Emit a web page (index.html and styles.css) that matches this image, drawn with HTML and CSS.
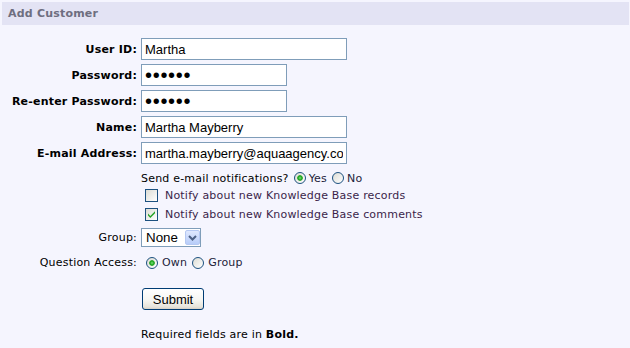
FILE: index.html
```html
<!DOCTYPE html>
<html>
<head>
<meta charset="utf-8">
<title>Add Customer</title>
<link rel="stylesheet" href="styles.css">
</head>
<body>
<div class="panel">
  <div class="header">Add Customer</div>
  <form class="form">
    <div class="row field">
      <label class="lbl req" for="uid">User ID:</label>
      <input class="txt wide" id="uid" type="text" value="Martha">
    </div>
    <div class="row field">
      <label class="lbl req" for="pw">Password:</label>
      <input class="txt narrow pw" id="pw" type="password" value="secret">
    </div>
    <div class="row field">
      <label class="lbl req" for="pw2">Re-enter Password:</label>
      <input class="txt narrow pw" id="pw2" type="password" value="secret">
    </div>
    <div class="row field">
      <label class="lbl req" for="name">Name:</label>
      <input class="txt wide" id="name" type="text" value="Martha Mayberry">
    </div>
    <div class="row field">
      <label class="lbl req" for="email">E-mail Address:</label>
      <input class="txt wide" id="email" type="text" value="martha.mayberry@aquaagency.com">
    </div>
    <div class="row send">
      <span class="lbl"></span>
      <span class="plain">Send e-mail notifications?</span>
      <input class="radio r-yes" type="radio" name="notify" id="ny" checked>
      <label class="opt" for="ny">Yes</label>
      <input class="radio r-no" type="radio" name="notify" id="nn">
      <label class="opt" for="nn">No</label>
    </div>
    <div class="row check">
      <span class="lbl"></span>
      <span class="cbwrap"><input class="cb" type="checkbox" id="kbr"></span>
      <label class="notify" for="kbr">Notify about new Knowledge Base records</label>
    </div>
    <div class="row check">
      <span class="lbl"></span>
      <span class="cbwrap"><input class="cb" type="checkbox" id="kbc" checked><svg class="tick" width="13" height="13" viewBox="0 0 13 13"><path d="M3 5.5 L5.3 8 L10 3.2 L10 5.2 L5.3 10 L3 7.5 Z" fill="#21a121"/></svg></span>
      <label class="notify" for="kbc">Notify about new Knowledge Base comments</label>
    </div>
    <div class="row group">
      <label class="lbl" for="grp">Group:</label>
      <span class="select">
        <select id="grp"><option>None</option></select>
        <span class="arrow"><svg width="15" height="15" viewBox="0 0 15 15"><path d="M4 6 L7.5 9.5 L11 6" fill="none" stroke="#4d6185" stroke-width="2"/></svg></span>
      </span>
    </div>
    <div class="row access">
      <span class="lbl">Question Access:</span>
      <input class="radio r-own" type="radio" name="qa" id="qo" checked>
      <label class="opt" for="qo">Own</label>
      <input class="radio r-grp" type="radio" name="qa" id="qg">
      <label class="opt" for="qg">Group</label>
    </div>
    <div class="row submit">
      <span class="lbl"></span>
      <button class="btn" type="button">Submit</button>
    </div>
    <div class="row note">
      <span class="lbl"></span>
      <span class="plain">Required fields are in <b>Bold.</b></span>
    </div>
  </form>
</div>
</body>
</html>
```
FILE: styles.css
```css
html, body {
  margin: 0;
  padding: 0;
  background: #f5f5fe;
}
body {
  font-family: "DejaVu Sans", Verdana, sans-serif;
  font-size: 11px;
  letter-spacing: 0.2px;
  color: #000;
}
.panel {
  padding: 2px 1px 0 2px;
}
.header {
  height: 23px;
  line-height: 23px;
  background: #e3e3f4;
  color: #6e6e80;
  font-weight: bold;
  padding-left: 6px;
}
.form {
  margin: 13px 0 0 -2px;
  display: flex;
  flex-direction: column;
}
.row {
  display: flex;
  align-items: center;
}
.lbl {
  flex: 0 0 137px;
  text-align: right;
  margin-right: 4px;
}
.req {
  font-weight: bold;
}
.field {
  height: 22px;
  margin-bottom: 4px;
}
.txt {
  box-sizing: border-box;
  height: 22px;
  border: 1px solid #7f9db9;
  background: #fff;
  padding: 0 3px;
  margin: 0;
  font-family: "Liberation Sans", Arial, sans-serif;
  font-size: 13px;
  letter-spacing: 0;
  color: #000;
  outline: none;
}
.wide { width: 206px; }
.narrow { width: 146px; }
.pw {
  font-size: 20px;
  letter-spacing: 0.7px;
}
.send {
  height: 16px;
  margin-top: 2px;
}
.radio {
  appearance: none;
  -webkit-appearance: none;
  box-sizing: border-box;
  width: 12px;
  height: 12px;
  margin: 0;
  border: 1px solid #1c5180;
  border-radius: 50%;
  background: linear-gradient(135deg, #dcdcd4, #fff);
}
.radio:checked {
  background:
    radial-gradient(circle, #7fe07f 0, #2bb02b 1.6px, #21a121 2.4px, rgba(33,161,33,0) 3.2px),
    linear-gradient(135deg, #dcdcd4, #fff);
}
.opt {
  color: #1d1d3a;
}
.r-yes { margin-left: 5px; margin-right: 3px; }
.r-no { margin-left: 5px; margin-right: 3px; }
.check {
  height: 19px;
}
.cbwrap {
  position: relative;
  width: 13px;
  height: 13px;
  margin-left: 4px;
  margin-right: 7px;
}
.cb {
  appearance: none;
  -webkit-appearance: none;
  box-sizing: border-box;
  width: 13px;
  height: 13px;
  margin: 0;
  display: block;
  border: 1px solid #1c5180;
  background: linear-gradient(135deg, #dcdcd4, #fff);
}
.tick {
  position: absolute;
  left: 0;
  top: 0;
}
.notify {
  color: #3b1f4a;
}
.group {
  height: 19px;
  margin-top: 4px;
}
.select {
  box-sizing: border-box;
  display: flex;
  align-items: center;
  width: 60px;
  height: 19px;
  border: 1px solid #7f9db9;
  background: #fff;
}
.select select {
  appearance: none;
  -webkit-appearance: none;
  border: none;
  background: transparent;
  font-family: "Liberation Sans", Arial, sans-serif;
  font-size: 13.33px;
  letter-spacing: 0;
  color: #000;
  padding: 0 0 0 4px;
  margin: 0;
  width: 43px;
  height: 17px;
  outline: none;
}
.arrow {
  box-sizing: border-box;
  width: 15px;
  height: 15px;
  border: 1px solid #b5c8f2;
  border-radius: 2px;
  background: linear-gradient(#dfe8fe, #b8cdf9);
  display: flex;
}
.arrow svg { display: block; margin: -1px; }
.access {
  height: 19px;
  margin-top: 6px;
}
.r-own { margin-left: 5px; margin-right: 4px; }
.r-grp { margin-left: 5px; margin-right: 4px; }
.submit {
  margin-top: 16px;
  height: 22px;
}
.btn {
  box-sizing: border-box;
  width: 62px;
  height: 22px;
  margin: 0 0 0 1px;
  border: 1px solid #003c74;
  border-radius: 3px;
  background: linear-gradient(180deg, #ffffff 0%, #f6f6f2 55%, #e6e3da 90%, #d6d0c5 100%);
  font-family: "Liberation Sans", Arial, sans-serif;
  font-size: 13px;
  letter-spacing: 0;
  color: #000;
  padding: 0;
}
.note {
  margin-top: 16px;
  height: 16px;
}
```
